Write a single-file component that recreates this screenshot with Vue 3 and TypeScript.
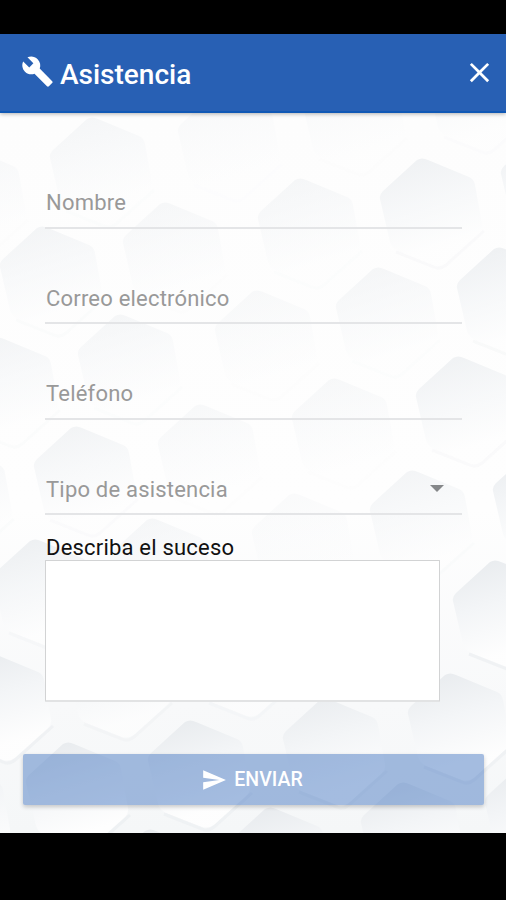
<script setup lang="ts">
import { ref } from 'vue'

interface Hex {
  x: number
  y: number
  o: number
}

interface Field {
  id: string
  label: string
  type: string
}

const fields: Field[] = [
  { id: 'nombre', label: 'Nombre', type: 'text' },
  { id: 'correo', label: 'Correo electrónico', type: 'email' },
  { id: 'telefono', label: 'Teléfono', type: 'tel' },
]

const description = ref('')

// Top vertex of every tile in the wallpaper, with its strength.
const hexes: Hex[] = [
  { x: -34, y: 34, o: 0.35 }, { x: 92, y: 4, o: 0.4 }, { x: 220, y: -22, o: 0.25 },
  { x: 345, y: -48, o: 0.3 }, { x: 470, y: -70, o: 0.45 }, { x: 543, y: 20, o: 0.7 },
  { x: 165, y: 89, o: 0.35 }, { x: 300, y: 65, o: 0.4 }, { x: 422, y: 45, o: 0.65 },
  { x: 42, y: 113, o: 0.5 }, { x: 120, y: 201, o: 0.4 }, { x: 257, y: 177, o: 0.28 },
  { x: 378, y: 154, o: 0.42 }, { x: 499, y: 134, o: 0.7 }, { x: -2, y: 224, o: 0.5 },
  { x: 200, y: 291, o: 0.3 }, { x: 334, y: 265, o: 0.32 }, { x: 458, y: 243, o: 0.65 },
  { x: 76, y: 313, o: 0.55 }, { x: -48, y: 333, o: 0.5 }, { x: 294, y: 380, o: 0.2 },
  { x: 412, y: 357, o: 0.5 }, { x: 535, y: 337, o: 0.9 }, { x: 152, y: 405, o: 0.4 },
  { x: 35, y: 426, o: 0.75 }, { x: 370, y: 472, o: 0.5 }, { x: 495, y: 447, o: 0.95 },
  { x: 110, y: 517, o: 0.7 }, { x: 235, y: 496, o: 0.6 }, { x: -9, y: 540, o: 0.95 },
  { x: 450, y: 560, o: 0.95 }, { x: 325, y: 585, o: 0.85 }, { x: 190, y: 607, o: 0.95 },
  { x: 68, y: 629, o: 1 }, { x: -50, y: 650, o: 0.8 }, { x: 403, y: 669, o: 1 },
  { x: 270, y: 694, o: 1 }, { x: 150, y: 716, o: 1 }, { x: 527, y: 649, o: 1 },
]

// Rims stay faint at the top left and grow clearer towards the bottom right.
const rimOpacity = (h: Hex): number => Math.min(1, h.o * h.o * (h.y > 440 ? 1 : 0.6))
</script>

<template>
  <main class="screen">
    <header class="bar">
      <svg class="wrench" viewBox="0 0 24 24" aria-hidden="true">
        <path d="M22.7 19l-9.1-9.1c.9-2.3.4-5-1.5-6.9-2-2-5-2.4-7.4-1.3L9 6 6 9 1.6 4.7C.4 7.1.9 10.1 2.9 12.1c1.9 1.9 4.6 2.4 6.9 1.5l9.1 9.1c.4.4 1 .4 1.4 0l2.3-2.3c.5-.4.5-1.1.1-1.4z" />
      </svg>
      <h1 class="title">Asistencia</h1>
      <button class="close" type="button">
        <svg viewBox="0 0 24 24" aria-hidden="true">
          <path d="M19 6.41L17.59 5 12 10.59 6.41 5 5 6.41 10.59 12 5 17.59 6.41 19 12 13.41 17.59 19 19 17.59 13.41 12z" />
        </svg>
      </button>
    </header>

    <section class="content">
      <svg class="wallpaper" viewBox="0 0 506 720" preserveAspectRatio="none" aria-hidden="true">
        <defs>
          <linearGradient id="tile" x1="0.3" y1="0" x2="0.6" y2="1">
            <stop offset="0" stop-color="#e8ebee" />
            <stop offset="0.4" stop-color="#f3f5f7" />
            <stop offset="0.85" stop-color="#fefefe" />
          </linearGradient>
        </defs>
        <g v-for="(h, i) in hexes" :key="i" :transform="`translate(${h.x} ${h.y})`">
          <path d="M-5 2Q0-1 6 2L47 19Q52 21 53 27L60 66Q61 71 57 75L25 104Q19 109 12 107L-24 93Q-30 90-32 84L-42 41Q-43 37-39 33Z" fill="url(#tile)" :opacity="h.o" />
          <path d="M-26 94L12 109Q18 112 24 107L62 73" fill="none" stroke="#eef1f3" stroke-width="3" :opacity="rimOpacity(h)" />
        </g>
      </svg>

      <form class="form" @submit.prevent>
        <label v-for="f in fields" :key="f.id" class="field">
          <span class="label">{{ f.label }}</span>
        </label>
        <div class="field select">
          <span class="label">Tipo de asistencia</span>
          <span class="caret"></span>
        </div>
        <label class="caption" for="suceso">Describa el suceso</label>
        <textarea id="suceso" v-model="description" class="area"></textarea>
        <button class="send" type="submit">
          <svg viewBox="0 0 24 24" aria-hidden="true">
            <path d="M2.01 21L23 12 2.01 3 2 10l15 2-15 2z" />
          </svg>
          <span>ENVIAR</span>
        </button>
      </form>
    </section>
  </main>
</template>

<style>
body {
  margin: 0;
  background: #000;
}
</style>

<style scoped>
.screen {
  box-sizing: border-box;
  width: 506px;
  height: 900px;
  padding: 34px 0 67px;
  display: flex;
  flex-direction: column;
  background: #000;
  font-family: Roboto, "Liberation Sans", sans-serif;
  overflow: hidden;
}
.bar {
  box-sizing: border-box;
  height: 79px;
  flex: none;
  display: flex;
  align-items: center;
  padding: 0 10px 0 21px;
  background: #2860b4;
  border-bottom: 2px solid #1058b5;
  box-shadow: 0 1px 4px rgba(0, 0, 0, 0.3);
  z-index: 1;
}
.wrench {
  width: 33px;
  height: 33px;
  margin-top: -2px;
  fill: #fff;
}
.title {
  flex: 1;
  margin: 4px 0 0 6px;
  color: #fff;
  font-size: 28px;
  font-weight: 500;
  line-height: 36px;
}
.close {
  display: flex;
  padding: 0;
  border: 0;
  background: none;
}
.close svg {
  width: 33px;
  height: 33px;
  fill: #fff;
}
.content {
  position: relative;
  flex: 1;
  background: linear-gradient(#fdfdfd 0%, #fefefe 55%, #f8f9fa 82%, #f5f7f8 100%);
  overflow: hidden;
}
.wallpaper {
  position: absolute;
  inset: 0;
  width: 100%;
  height: 100%;
}
.form {
  position: relative;
  display: flex;
  flex-direction: column;
  padding: 20px 22px 0 23px;
}
.field {
  box-sizing: border-box;
  height: 95.6px;
  margin: 0 22px;
  display: flex;
  align-items: flex-end;
  justify-content: space-between;
  padding: 0 18px 8.6px 1px;
  border-bottom: 2px solid #e4e5e7;
}
.label,
.caption {
  font-size: 22px;
  line-height: 30px;
  letter-spacing: 0.2px;
}
.label {
  color: #999;
}
.caret {
  width: 0;
  margin-bottom: 13px;
  border: 7px solid transparent;
  border-top-color: #858789;
  border-bottom: 0;
}
.caption {
  margin: 17.6px 0 0 23px;
  color: #111;
}
.area {
  box-sizing: border-box;
  width: 395px;
  height: 142px;
  margin: -2.6px 0 0 22px;
  padding: 8px;
  border: 1px solid #d2d3d4;
  border-bottom: 2px solid #e2e3e4;
  border-radius: 1px;
  background: #fff;
  font: inherit;
  font-size: 22px;
  resize: none;
  outline: none;
}
.send {
  height: 51px;
  margin-top: 52px;
  padding: 0 3px 0 0;
  display: flex;
  align-items: center;
  justify-content: center;
  gap: 7px;
  border: 0;
  border-radius: 2px;
  background: rgba(40, 97, 184, 0.42);
  box-shadow: 0 2px 4px rgba(0, 0, 0, 0.2);
  color: #fff;
  font-family: inherit;
  font-size: 19.5px;
  font-weight: 500;
}
.send svg {
  width: 26px;
  height: 26px;
  fill: #fff;
}
</style>
